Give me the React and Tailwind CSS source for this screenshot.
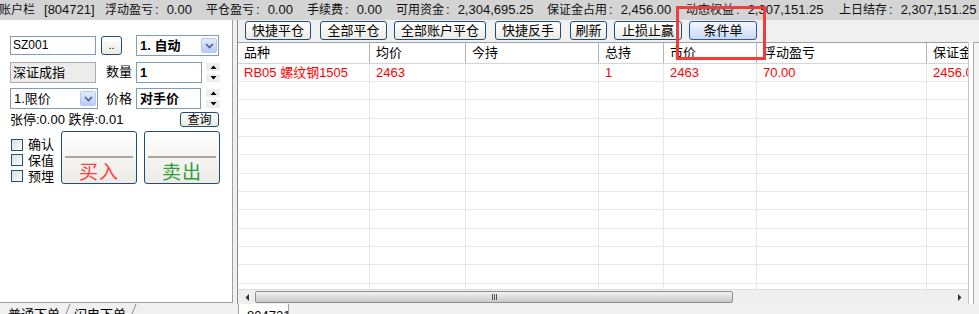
import React from 'react';

const stats = [
  { label: '账户栏', value: '[804721]', w: 'w-[106px]', plain: true },
  { label: '浮动盈亏', value: '0.00', w: 'w-[101px]' },
  { label: '平仓盈亏', value: '0.00', w: 'w-[101px]' },
  { label: '手续费', value: '0.00', w: 'w-[89px]' },
  { label: '可用资金', value: '2,304,695.25', w: 'w-[151px]' },
  { label: '保证金占用', value: '2,456.00', w: 'w-[139px]' },
  { label: '动态权益', value: '2,307,151.25', w: 'w-[153px]' },
  { label: '上日结存', value: '2,307,151.25', w: 'w-[150px]' },
];

const tools = [
  { t: '快捷平仓', c: 'w-[66px] ml-[7px]' },
  { t: '全部平仓', c: 'w-[67px] ml-[9px]' },
  { t: '全部账户平仓', c: 'w-[92px] ml-[7px]' },
  { t: '快捷反手', c: 'w-[66px] ml-[9px]' },
  { t: '刷新', c: 'w-[37px] ml-[9px]' },
  { t: '止损止赢', c: 'w-[68px] ml-[7px]' },
  { t: '条件单', c: 'w-[68px] ml-[7px]', active: true },
];

const cols = [
  { t: '品种', w: 'w-[132px]', v: 'RB05 螺纹钢1505' },
  { t: '均价', w: 'w-[96px]', v: '2463' },
  { t: '今持', w: 'w-[133px]', v: '' },
  { t: '总持', w: 'w-[65px]', v: '1' },
  { t: '市价', w: 'w-[93px]', v: '2463' },
  { t: '浮动盈亏', w: 'w-[170px]', v: '70.00' },
  { t: '保证金', w: 'w-[60px]', v: '2456.00' },
];

const rowHeights = ['h-[18px]', 'h-[18px]', 'h-[19px]', 'h-[18px]', 'h-[18px]', 'h-[19px]', 'h-[18px]', 'h-[18px]', 'h-[19px]', 'h-[18px]', 'h-[18px]', 'h-[19px]', 'h-[18px]'];

function Chevron() {
  return (
    <svg width="9" height="6" viewBox="0 0 9 6">
      <path d="M1 1 L4.5 4.5 L8 1" fill="none" stroke="#4d6185" strokeWidth="1.7" />
    </svg>
  );
}

function DropBtn() {
  return (
    <div className="w-[16px] h-[15px] rounded-[2px] bg-linear-to-b from-[#e3ebfd] to-[#b8ccf6] border border-[#b4c8f0] flex items-center justify-center">
      <Chevron />
    </div>
  );
}

function Spin() {
  return (
    <div className="w-[14px] h-[19px] flex flex-col justify-between">
      <div className="h-[8px] bg-[#eeeeee] flex items-center justify-center">
        <svg width="7" height="4" viewBox="0 0 7 4"><path d="M0.5 4 L3.5 0.5 L6.5 4Z" fill="#000" /></svg>
      </div>
      <div className="h-[8px] bg-[#eeeeee] flex items-center justify-center">
        <svg width="7" height="4" viewBox="0 0 7 4"><path d="M0.5 0 L3.5 3.5 L6.5 0Z" fill="#000" /></svg>
      </div>
    </div>
  );
}

function Check({ label }) {
  return (
    <div className="flex items-center h-[16px]">
      <div className="w-[12px] h-[12px] border border-[#1c5180] bg-linear-to-br from-[#dcdcd7] to-white" />
      <span className="ml-[5px] text-[13px] leading-none text-black">{label}</span>
    </div>
  );
}

export default function App() {
  return (
    <div className="w-[979px] h-[314px] overflow-hidden relative bg-[#f0f0f0] font-['Liberation_Sans','Noto_Sans_CJK_SC',sans-serif] text-black">
      {/* top account bar */}
      <div className="h-[20px] bg-[#d4d4d4] flex items-center whitespace-nowrap text-[#111] ml-[-1px]">
        {stats.map((s, i) => (
          <div key={i} className={`${s.w} shrink-0 flex items-center`}>
            <span className="text-[12px]">{s.label}</span>
            {s.plain ? (
              <span className="text-[13px] ml-[9px]">{s.value}</span>
            ) : (
              <>
                <span className="text-[13px] ml-[2px]">:</span>
                <span className="text-[13px] ml-[8px]">{s.value}</span>
              </>
            )}
          </div>
        ))}
      </div>

      <div className="flex h-[284px]">
        {/* left order panel */}
        <div className="w-[233px] h-[283px] bg-white border-r border-b border-[#a0a0a0] pl-[10px] pt-[15px] shrink-0">
          {/* row 1 */}
          <div className="flex items-center h-[21px]">
            <div className="w-[86px] h-[19px] border border-[#7f9db9] bg-white text-[12px] leading-[17px] pl-[2px]">SZ001</div>
            <div className="w-[21px] h-[19px] ml-[5px] border border-[#1f4e79] rounded-[3px] bg-linear-to-b from-white to-[#ebebe4] text-[11px] leading-[12px] flex items-end justify-center pb-[3px]">..</div>
            <div className="w-[83px] h-[21px] ml-[14px] border border-[#7f9db9] bg-white flex items-center justify-between pl-[3px] pr-[1px]">
              <span className="text-[13px] font-bold">1. 自动</span>
              <DropBtn />
            </div>
          </div>
          {/* row 2 */}
          <div className="flex items-center h-[22px] mt-[5px]">
            <div className="w-[86px] h-[21px] border border-[#a5acb5] bg-[#ececec] text-[13px] leading-[19px] pl-[2px]">深证成指</div>
            <span className="ml-[10px] w-[30px] text-[13px]">数量</span>
            <div className="w-[66px] h-[21px] border border-[#7f9db9] bg-white text-[13px] font-bold leading-[19px] pl-[3px]">1</div>
            <div className="ml-[4px]"><Spin /></div>
          </div>
          {/* row 3 */}
          <div className="flex items-center h-[21px] mt-[5px]">
            <div className="w-[88px] h-[21px] border border-[#7f9db9] bg-white flex items-center justify-between pl-[3px] pr-[1px]">
              <span className="text-[13px]">1.限价</span>
              <DropBtn />
            </div>
            <span className="ml-[8px] w-[30px] text-[13px]">价格</span>
            <div className="w-[65px] h-[21px] border border-[#7f9db9] bg-white text-[13px] font-bold leading-[19px] pl-[3px]">对手价</div>
            <div className="ml-[5px]"><Spin /></div>
          </div>
          {/* row 4 */}
          <div className="flex items-center h-[15px] mt-[3px] pr-[13px] justify-between">
            <span className="text-[13px] leading-none">张停:0.00 跌停:0.01</span>
            <div className="w-[39px] h-[15px] border border-[#1f4e79] rounded-[3px] bg-linear-to-b from-white to-[#ebebe4] text-[12px] leading-none flex items-center justify-center">查询</div>
          </div>
          {/* row 5 */}
          <div className="flex h-[53px] mt-[4px]">
            <div className="w-[50px] ml-[1px] pt-[6px] flex flex-col gap-[0.5px]">
              <Check label="确认" />
              <Check label="保值" />
              <Check label="预埋" />
            </div>
            <div className="w-[76px] h-[53px] border border-[#1f4e79] rounded-[3px] bg-linear-to-b from-white to-[#ecebe6] flex flex-col">
              <div className="h-[26px] border-b-2 border-[#aca899] mx-[3px]" />
              <div className="flex-1 flex items-center justify-center pt-[3px] text-[19px] text-[#ff3c3c] leading-none tracking-[1px]">买入</div>
            </div>
            <div className="w-[76px] h-[53px] ml-[7px] border border-[#1f4e79] rounded-[3px] bg-linear-to-b from-white to-[#ecebe6] flex flex-col">
              <div className="h-[26px] border-b-2 border-[#aca899] mx-[3px]" />
              <div className="flex-1 flex items-center justify-center pt-[3px] text-[19px] text-[#2f9e3a] leading-none tracking-[1px]">卖出</div>
            </div>
          </div>
        </div>

        <div className="w-[4px] shrink-0 bg-[#f0f0f0]" />

        {/* right section */}
        <div className="w-[742px] shrink-0 border-l border-[#8a8a8a] flex flex-col">
          {/* toolbar */}
          <div className="h-[22px] flex items-start pt-[1px]">
            {tools.map((b, i) => (
              <div
                key={i}
                className={`${b.c} h-[19px] rounded-[3px] border flex items-center justify-center text-[13px] leading-none ${b.active ? 'border-[#2d5a9a] bg-linear-to-b from-[#f5f8ff] to-[#c9d8f3]' : 'border-[#1f4e79] bg-linear-to-b from-white to-[#ebebe4]'}`}
              >
                {b.t}
              </div>
            ))}
          </div>

          <div className="flex h-[262px]">
            {/* table */}
            <div className="w-[730px] flex flex-col border-t border-[#a0a0a0] bg-white">
              <div className="h-[21px] flex border-b border-[#d5d5d5] shrink-0 overflow-hidden">
                {cols.map((c, i) => (
                  <div key={i} className={`${c.w} shrink-0 border-r border-[#b5b5b5] text-[13px] leading-[20px] pl-[6px] whitespace-nowrap overflow-hidden`}>
                    {c.t}
                  </div>
                ))}
              </div>
              <div className="h-[225px] overflow-hidden">
                {rowHeights.map((h, r) => (
                  <div key={r} className={`${h} flex border-b border-[#e8e8e8] shrink-0`}>
                    {cols.map((c, i) => (
                      <div key={i} className={`${c.w} shrink-0 border-r border-[#e8e8e8] text-[13px] leading-[18px] pl-[6px] text-[#ff0000] whitespace-nowrap overflow-hidden`}>
                        {r === 0 ? c.v : ''}
                      </div>
                    ))}
                  </div>
                ))}
              </div>
              {/* horizontal scrollbar */}
              <div className="h-[15px] flex items-stretch bg-[#efefef] border-t border-[#dcdcdc] shrink-0">
                <div className="w-[17px] flex items-center justify-center">
                  <svg width="4" height="7" viewBox="0 0 4 7"><path d="M4 0 L0.5 3.5 L4 7Z" fill="#333" /></svg>
                </div>
                <div className="w-[478px] my-[1px] rounded-[2px] border border-[#8f8f8f] bg-linear-to-b from-[#f2f2f2] to-[#c9c9c9] flex items-center justify-center">
                  <div className="flex gap-[1px]">
                    <div className="w-[1px] h-[6px] bg-[#555]" />
                    <div className="w-[1px] h-[6px] bg-[#555]" />
                    <div className="w-[1px] h-[6px] bg-[#555]" />
                  </div>
                </div>
                <div className="flex-1" />
                <div className="w-[17px] flex items-center justify-center">
                  <svg width="4" height="7" viewBox="0 0 4 7"><path d="M0 0 L3.5 3.5 L0 7Z" fill="#333" /></svg>
                </div>
              </div>
            </div>
            {/* right strip */}
            <div className="w-[5px] bg-white border-l border-[#c8c8c8]" />
            <div className="w-[6px] bg-[#f5f5f5] border-l border-t border-[#a8a8a8]" />
          </div>
        </div>
      </div>

      {/* bottom tabs */}
      <div className="h-[10px] flex relative">
        <div className="w-[237px] flex items-start text-[13px] leading-none overflow-visible">
          <span className="ml-[8px] mt-[4px]">普通下单</span>
          <svg className="ml-[5px]" width="6" height="10" viewBox="0 0 6 10"><path d="M5 0 L1 10" stroke="#8a8a8a" strokeWidth="1" /></svg>
          <span className="ml-[3px] mt-[4px]">闪电下单</span>
          <svg className="ml-[5px]" width="6" height="10" viewBox="0 0 6 10"><path d="M5 0 L1 10" stroke="#8a8a8a" strokeWidth="1" /></svg>
        </div>
        <div className="w-[51px] h-[10px] ml-[1px] bg-white border-l border-r border-[#a0a0a0] text-[13px] leading-none pl-[8px] pt-[5px] overflow-hidden">804721</div>
      </div>

      {/* red annotation box */}
      <div className="absolute left-[676px] top-[6px] w-[90px] h-[54px] border-[3px] border-[#f23b3b]" />
    </div>
  );
}
